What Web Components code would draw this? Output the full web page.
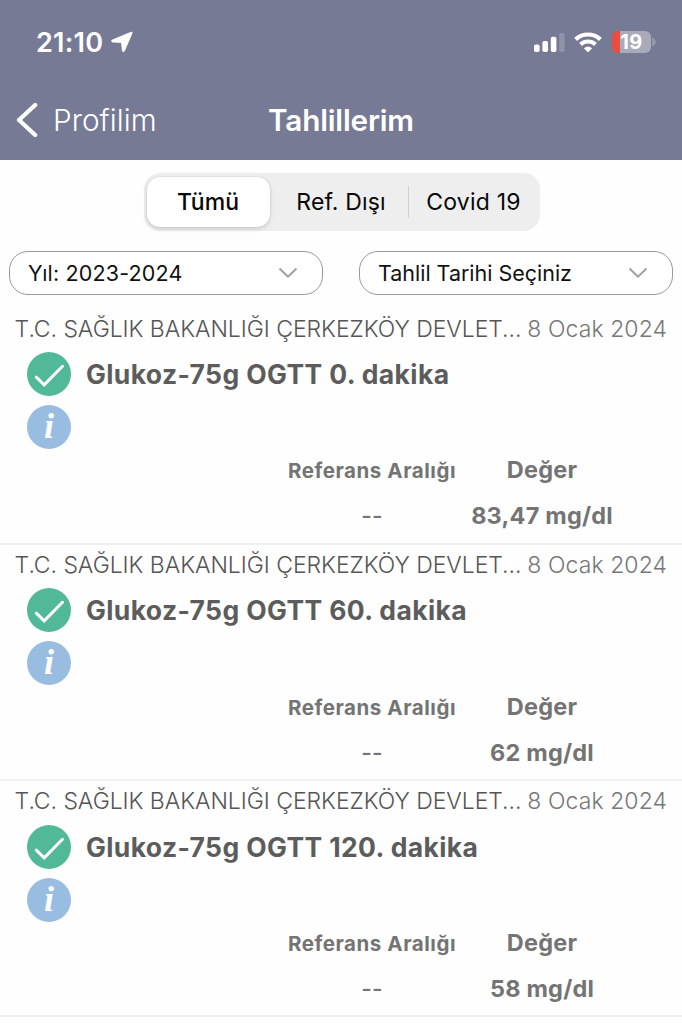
<!DOCTYPE html>
<html lang="tr">
<head>
<meta charset="utf-8">
<title>Tahlillerim</title>
<style>
html,body{margin:0;height:100%;overflow:hidden;background:#fefefe;font-family:Inter,"Liberation Sans",sans-serif}
</style>
</head>
<body>
<lab-app></lab-app>
<script>
const define=(name,html)=>customElements.define(name,class extends HTMLElement{
  constructor(){
    super();
    const t=document.createElement('template');
    t.innerHTML=html;
    this.attachShadow({mode:'open'}).append(t.content.cloneNode(true));
  }
});

define('status-bar',`<style>
:host{display:flex;align-items:center;height:84px;padding:0 26px 0 36px;box-sizing:border-box;color:#fff}
.time{font-size:27px;font-weight:600;line-height:30px;letter-spacing:.25px;width:68px;white-space:nowrap;padding-top:2px}
svg{display:block;flex:none}
.arrow{margin-left:7px}
.right{margin-left:auto;display:flex;align-items:center}
.wifi{margin-left:8px}
.bat{margin-left:10px;position:relative;width:39px;height:22px;border-radius:6px;overflow:hidden;background:linear-gradient(90deg,#eb4e3f 8px,#a9abba 8px);font-size:20px;font-weight:700;line-height:22px;text-align:center;letter-spacing:.4px;box-sizing:border-box}
.tip{margin-left:1px}
</style>
<span class="time">21:10</span>
<svg class="arrow" width="22" height="22" viewBox="0 0 22 22"><path d="M20 1.2Q21.6.8 21 2.4L13.4 20Q12.2 21.8 11.4 19.8L10.6 12.4Q10.5 11.6 9.8 11.5L1.5 11Q-.5 10.2 1.2 9.1Z" fill="#fff" stroke="#fff" stroke-width=".8" stroke-linejoin="round"/></svg>
<div class="right">
<svg width="32" height="22" viewBox="0 0 32 22"><g fill="#fff"><rect x="0" y="13.5" width="5.6" height="7.5" rx="1.8"/><rect x="8.4" y="10" width="5.6" height="11" rx="1.8"/><rect x="16.8" y="5.8" width="5.6" height="15.2" rx="1.8"/><rect x="25.2" y="2" width="5.4" height="19" rx="1.8" opacity=".2"/></g></svg>
<svg class="wifi" width="28" height="21" viewBox="0 0 28 21"><g fill="none" stroke="#fff" stroke-width="4.2"><path d="M1.6 7.4Q6.9 2.5 14 2.5T26.4 7.4"/><path d="M6.5 12.4Q9.8 9.5 14 9.5T21.5 12.4"/></g><path d="M9.9 16.2Q14 12.8 18.1 16.2L14.7 19.8Q14 20.4 13.3 19.8Z" fill="#fff"/></svg>
<div class="bat">19</div>
<svg class="tip" width="4" height="10" viewBox="0 0 4 10"><path d="M0 0Q4 3 4 5T0 10Z" fill="#9698aa"/></svg>
</div>`);

define('nav-bar',`<style>
:host{display:grid;grid-template-columns:1fr auto 1fr;align-items:center;height:72px;color:#fff;font-size:29.7px;line-height:36px}
.back{display:flex;align-items:center;padding-left:16px;font-weight:300;letter-spacing:.05px}
svg{margin-right:15px}
.title{font-weight:600;letter-spacing:-.18px}
</style>
<div class="back"><svg width="22" height="36" viewBox="0 0 22 36"><path d="M19.2 3L3 18L19.2 33" fill="none" stroke="#fff" stroke-width="4.2" stroke-linecap="round" stroke-linejoin="round"/></svg><slot name="back"></slot></div>
<div class="title"><slot></slot></div>`);

define('segment-bar',`<style>
:host{display:flex;width:396px;height:58px;margin:13px auto 0;position:relative;left:.5px;box-sizing:border-box;padding:4px 3px;border-radius:16px;background:#eee;font-size:23px;line-height:28px;color:#080808}
div{display:flex;align-items:center;justify-content:center;white-space:nowrap}
.on{width:123px;border-radius:13px;background:#fff;box-shadow:0 2px 5px #0002,0 0 2px #0002;font-weight:500}
.b{width:138px;padding-left:5px;box-sizing:border-box;letter-spacing:.15px}
.c{flex:1;padding-left:2px;letter-spacing:.2px}
.sep{width:1px;height:32px;align-self:center;background:#d0d0d0}
</style>
<div class="on"><slot name="a"></slot></div><div class="b"><slot name="b"></slot></div><div class="sep"></div><div class="c"><slot name="c"></slot></div>`);

define('select-box',`<style>
:host{display:flex;align-items:center;justify-content:space-between;width:314px;height:44px;box-sizing:border-box;border:1px solid #999;border-radius:19px;padding:0 24px 0 18px;background:#fff;color:#111;font-size:21.5px;line-height:26px;letter-spacing:var(--track,0);white-space:nowrap}
</style>
<span><slot></slot></span>
<svg width="20" height="12" viewBox="0 0 20 12"><path d="M1.5 1.5L10 9.7L18.5 1.5" fill="none" stroke="#a0a0a0" stroke-width="2"/></svg>`);

define('result-row',`<style>
:host{display:block;height:236.4px;box-sizing:border-box;border-bottom:2px solid #eee}
.top{display:flex;justify-content:space-between;padding:6.4px 15px 0;font-size:23px;line-height:28px;font-weight:300;color:#555;white-space:nowrap}
.org{letter-spacing:-.05px;margin-left:-.4px}
.date{color:#777;letter-spacing:.07px}
.body{display:grid;grid-template-columns:44px 1fr;column-gap:15px;row-gap:9px;padding:9.2px 27px 0;align-items:center}
svg{display:block}
.name{font-size:26.5px;line-height:32px;font-weight:650;color:#5c5c5c;letter-spacing:.38px;white-space:nowrap}
.i{width:44px;height:44px;border-radius:50%;background:#98bde0;color:#fff;font:italic bold 36px/42px "Liberation Serif",serif;text-align:center}
.vals{display:grid;grid-template-columns:188px 152px;margin:6.6px 0 0 278px;color:#747474;font-weight:650;text-align:center;align-items:baseline;font-size:23.5px;line-height:30px;row-gap:15px;white-space:nowrap;letter-spacing:.2px}
.ref{font-size:20.5px;letter-spacing:.55px}
.dash{font-weight:500;font-size:23px;letter-spacing:0}
</style>
<div class="top"><span class="org">T.C. SAĞLIK BAKANLIĞI ÇERKEZKÖY DEVLET...</span><span class="date">8 Ocak 2024</span></div>
<div class="body">
<svg width="44" height="44" viewBox="0 0 44 44"><circle cx="22" cy="22" r="22" fill="#52b998"/><path d="M9.3 25.2L17.2 32.8L35.5 14.3" fill="none" stroke="#fff" stroke-width="3" stroke-linecap="round"/></svg>
<div class="name"><slot name="name"></slot></div>
<div class="i">i</div>
</div>
<div class="vals"><span class="ref">Referans Aralığı</span><span>Değer</span><span class="dash">--</span><span><slot name="value"></slot></span></div>`);

define('lab-app',`<style>
:host{display:block;width:682px;height:1024px;overflow:hidden;background:#fefefe}
header{display:block;height:160px;background:#767a94}
.sel{display:flex;justify-content:space-between;padding:20px 9px 13.2px}
.year{--track:.17px}
.day{--track:-.02px}
</style>
<header><status-bar></status-bar><nav-bar><span slot="back">Profilim</span>Tahlillerim</nav-bar></header>
<segment-bar><span slot="a">Tümü</span><span slot="b">Ref. Dışı</span><span slot="c">Covid 19</span></segment-bar>
<div class="sel"><select-box class="year">Yıl: 2023-2024</select-box><select-box class="day">Tahlil Tarihi Seçiniz</select-box></div>
<result-row><span slot="name">Glukoz-75g OGTT 0. dakika</span><span slot="value">83,47 mg/dl</span></result-row>
<result-row><span slot="name">Glukoz-75g OGTT 60. dakika</span><span slot="value">62 mg/dl</span></result-row>
<result-row><span slot="name">Glukoz-75g OGTT 120. dakika</span><span slot="value">58 mg/dl</span></result-row>`);
</script>
</body>
</html>
